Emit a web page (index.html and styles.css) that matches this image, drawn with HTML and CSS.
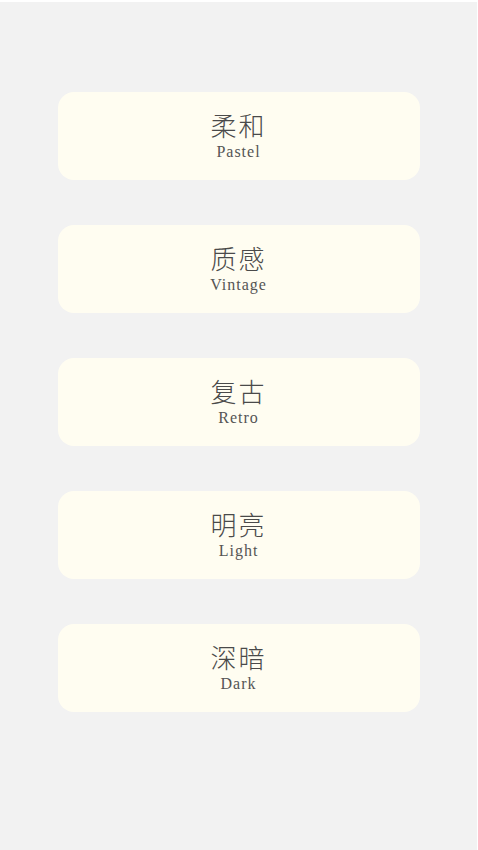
FILE: index.html
```html
<!DOCTYPE html>
<html lang="zh">
<head>
  <meta charset="UTF-8">
  <title>风格选择</title>
  <link rel="stylesheet" href="styles.css">
</head>
<body>

  <!-- Style list -->
  <div class="page">
    <div class="card">
      <div class="title">柔和</div>
      <div class="sub">Pastel</div>
    </div>
    <div class="card">
      <div class="title">质感</div>
      <div class="sub">Vintage</div>
    </div>
    <div class="card">
      <div class="title">复古</div>
      <div class="sub">Retro</div>
    </div>
    <div class="card">
      <div class="title">明亮</div>
      <div class="sub">Light</div>
    </div>
    <div class="card">
      <div class="title">深暗</div>
      <div class="sub">Dark</div>
    </div>
  </div>

</body>
</html>
```

FILE: styles.css
```css
* {
  box-sizing: border-box;
}

body {
  margin: 0;
  background-color: #ffffff;
}

.page {
  margin-top: 2px;
  margin-right: 1px;
  min-height: 848px;
  background-color: #f2f2f2;
  padding-top: 90px;
  display: flex;
  flex-direction: column;
  align-items: center;
  gap: 45px;
}

.card {
  width: 362px;
  height: 88px;
  background-color: #fffdf1;
  border-radius: 16px;
  display: flex;
  flex-direction: column;
  align-items: center;
  justify-content: center;
  color: #4a4a4a;
}

.title {
  font-family: "Noto Sans CJK SC", sans-serif;
  font-weight: 300;
  font-size: 26px;
  line-height: 28px;
  letter-spacing: 2px;
}

.sub {
  margin-top: 4px;
  font-family: "Liberation Serif", serif;
  font-size: 16px;
  line-height: 18px;
  letter-spacing: 1px;
  color: #555;
}
```
